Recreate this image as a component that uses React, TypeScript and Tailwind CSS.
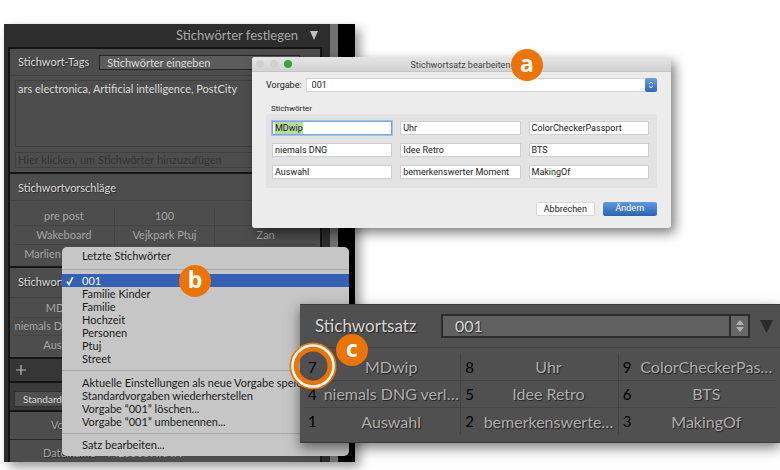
import { ReactNode } from 'react';

const suggestions = ['pre post', '100', '', 'Wakeboard', 'Vejkpark Ptuj', 'Zan', 'Marlien Familien', '', ''];
const panelSet = ['MDwip', 'Uhr', 'ColorChecker', 'niemals DNG verle…', 'Idee Retro', 'BTS', 'Auswahl', '', 'MakingOf'];
const presets = ['001', 'Familie Kinder', 'Familie', 'Hochzeit', 'Personen', 'Ptuj', 'Street'];
const actions = [
  'Aktuelle Einstellungen als neue Vorgabe speichern...',
  'Standardvorgaben wiederherstellen',
  'Vorgabe “001” löschen...',
  'Vorgabe “001” umbenennen...',
];
const dialogWords = [
  'MDwip',
  'Uhr',
  'ColorCheckerPassport',
  'niemals DNG',
  'Idee Retro',
  'BTS',
  'Auswahl',
  'bemerkenswerter Moment',
  'MakingOf',
];
const setWords = [
  { num: 7, label: 'MDwip' },
  { num: 8, label: 'Uhr' },
  { num: 9, label: 'ColorCheckerPas…' },
  { num: 4, label: 'niemals DNG verl…' },
  { num: 5, label: 'Idee Retro' },
  { num: 6, label: 'BTS' },
  { num: 1, label: 'Auswahl' },
  { num: 2, label: 'bemerkenswerte…' },
  { num: 3, label: 'MakingOf' },
];

function Badge({ children, className }: { children: ReactNode; className: string }) {
  return (
    <span
      className={`absolute flex h-8 w-8 items-center justify-center rounded-full bg-[#ec7404] pb-1 font-['Open_Sans',sans-serif] text-[23px] leading-none font-bold text-white ${className}`}
    >
      {children}
    </span>
  );
}

function WordGrid({ words, rowClass }: { words: string[]; rowClass: string }) {
  return (
    <div className="grid grid-cols-3 px-1">
      {words.map((word, i) => (
        <button
          key={i}
          className={`truncate border-r border-b border-[#444] text-[#a5a5a5] nth-[3n]:border-r-0 nth-[n+7]:border-b-0 ${rowClass}`}
        >
          {word}
        </button>
      ))}
    </div>
  );
}

function PresetMenu() {
  return (
    <div
      role="menu"
      className="absolute top-[223px] right-[6px] left-[58px] overflow-hidden rounded-[5px] bg-[#c6c6c6] pt-[2px] pb-[5px] text-[11px] leading-[13px] text-[#1c1c1c]"
    >
      <button role="menuitem" className="block h-[13px] pl-5">
        Letzte Stichwörter
      </button>
      <hr className="mt-[7px] mb-[4px] border-[#a9a9a9]" />
      {presets.map((name, i) => (
        <button
          key={name}
          role="menuitem"
          className={`flex h-[13px] w-full items-center pl-[4px] ${i === 0 ? 'bg-[#3560b4] text-white' : ''}`}
        >
          <span className="flex w-4 shrink-0">
            {i === 0 && (
              <svg viewBox="0 0 8 10" className="h-[10px] w-2" fill="none" stroke="currentColor" strokeWidth="1.6">
                <path d="M1 5.5 L3 8.5 L6.8 1" />
              </svg>
            )}
          </span>
          {name}
        </button>
      ))}
      <hr className="my-[5px] border-[#a9a9a9]" />
      {actions.map((action) => (
        <button key={action} role="menuitem" className="block h-[13px] w-full pl-5 text-left whitespace-nowrap">
          {action}
        </button>
      ))}
      <hr className="mt-[5px] mb-[4px] border-[#a9a9a9]" />
      <button role="menuitem" className="block h-[13px] pl-5">
        Satz bearbeiten...
      </button>
      <Badge className="top-[18px] left-[117px]">b</Badge>
    </div>
  );
}

function KeywordPanel() {
  return (
    <section className="absolute top-[24px] left-[4px] w-[45%] font-[Lato,sans-serif] shadow-[5px_5px_10px_rgba(0,0,0,0.4)]">
      <div className="flex bg-[#2d2d2d]">
        <div className="min-w-0 flex-1 pr-2 pl-1">
          <header className="flex h-[23px] items-center justify-end gap-3 pr-1 text-[13px] text-[#a8a8a8]">
            <h2>Stichwörter festlegen</h2>
            <svg viewBox="0 0 8 10" className="h-[10px] w-2" fill="#c0c0c0">
              <path d="M0 0H8L4 9Z" />
            </svg>
          </header>
          <div className="border-2 border-b-0 border-[#151515] bg-[#4d4d4d] text-[11px] text-[#dadada] text-shadow-[1px_1px_1px_#2a2a2a]">
            <div className="flex h-[27px] items-center gap-[10px] border-b border-[#434343] pr-5 pl-2">
              <label htmlFor="tags">Stichwort-Tags</label>
              <select
                id="tags"
                className="h-[15px] min-w-0 flex-1 appearance-none border border-[#252525] bg-[#5c5c5c] pl-[7px] leading-none"
              >
                <option>Stichwörter eingeben</option>
              </select>
            </div>
            <div className="px-[5px] py-[4px]">
              <textarea
                aria-label="Stichwörter"
                className="block h-[67px] w-full resize-none border border-[#3f3f3f] px-[2px] pt-px leading-[14px]"
                defaultValue="ars electronica, Artificial intelligence, PostCity"
              />
              <input
                aria-label="Stichwörter hinzufügen"
                placeholder="Hier klicken, um Stichwörter hinzuzufügen"
                className="mt-[5px] block h-4 w-full border border-[#404040] px-[2px] placeholder:text-[#343434]"
              />
            </div>
            <div className="border-t-2 border-[#151515] pb-[2px]">
              <h3 className="flex h-[27px] items-center border-b border-[#434343] pt-[2px] pl-2">
                Stichwortvorschläge
              </h3>
              <div className="pt-[6px]">
                <WordGrid words={suggestions} rowClass="h-[19px]" />
              </div>
            </div>
            <div className="border-t-2 border-[#151515] pb-[3px]">
              <h3 className="flex h-[29px] items-center pl-2">Stichwortsatz</h3>
              <div className="border-t border-[#434343] pt-[2px]">
                <WordGrid words={panelSet} rowClass="h-[18px]" />
              </div>
            </div>
            <div className="flex h-[26px] items-center border-y-2 border-[#151515] bg-[#363636] pl-[6px]">
              <button aria-label="Hinzufügen">
                <svg viewBox="0 0 10 10" className="h-[10px] w-[10px]" stroke="#bbb" strokeWidth="1.2">
                  <path d="M5 0V10M0 5H10" />
                </svg>
              </button>
            </div>
            <div className="flex h-[29px] items-center border-b-2 border-[#151515] bg-[#3a3a3a] px-1 pt-1">
              <button className="h-4 w-20 border border-[#303030] bg-[#505050] pl-2 text-left text-[10px]">
                Standard
              </button>
            </div>
            <div className="flex h-[28px] items-center border-b border-[#2a2a2a] pl-[41px] text-[#a5a5a5]">Vorgabe</div>
            <div className="flex h-[22px] items-center gap-3 pt-1 pl-[33px] text-[#a5a5a5]">
              <label htmlFor="file">Dateiname</label>
              <input id="file" defaultValue="MDJ0067.RAW" className="min-w-0 flex-1" />
            </div>
          </div>
        </div>
        <div className="w-[8px] bg-[#707070]" />
        <div className="w-[17px] bg-black" />
      </div>
      <PresetMenu />
    </section>
  );
}

function EditDialog() {
  return (
    <section
      role="dialog"
      aria-label="Stichwortsatz bearbeiten"
      className="absolute top-[57px] right-[14%] left-[252px] rounded-[3px] bg-[#ececec] font-[Roboto,sans-serif] text-[9px] text-[#222] shadow-[4px_5px_12px_rgba(0,0,0,0.5)]"
    >
      <header className="flex h-[15px] items-center gap-[6px] rounded-t-[3px] border-b border-[#c4c4c4] bg-gradient-to-b from-[#e6e6e6] to-[#d2d2d2] px-1">
        <span className="h-2 w-2 rounded-full bg-[#d0d0d0]" />
        <span className="h-2 w-2 rounded-full bg-[#d0d0d0]" />
        <span className="h-2 w-2 rounded-full bg-[#2fa836]" />
        <h2 className="flex-1 pt-[3px] pr-11 text-center text-[#444]">Stichwortsatz bearbeiten</h2>
      </header>
      <div className="px-[14px] pt-[6px] pb-3">
        <div className="flex h-[14px] items-center gap-1">
          <label htmlFor="preset" className="pt-[2px]">
            Vorgabe:
          </label>
          <div className="relative flex-1">
            <select
              id="preset"
              className="block h-[14px] w-full appearance-none border border-[#d6d6d6] bg-white pt-px pl-[5px] leading-none"
            >
              <option>001</option>
            </select>
            <span className="pointer-events-none absolute top-0 right-0 flex h-[14px] w-3 items-center justify-center rounded-[2px] bg-gradient-to-b from-[#6b9fdc] to-[#2f67b8]">
              <svg viewBox="0 0 6 8" className="h-2 w-[6px]" fill="none" stroke="white">
                <path d="M1 3L3 1L5 3M1 5L3 7L5 5" />
              </svg>
            </span>
          </div>
        </div>
        <p className="pt-[11px] pl-[5px] text-[8px] leading-[11px]">Stichwörter</p>
        <div className="grid grid-cols-3 gap-2 rounded-[2px] bg-[#e3e3e3] pt-[7px] pr-2 pb-[9px] pl-[6px]">
          {dialogWords.map((word, i) => (
            <div
              key={word}
              className={`flex h-[14px] border bg-white pl-[2px] ${i === 0 ? 'border-[#7fa6dc] ring-1 ring-[#a3c0e8]' : 'border-[#cfcfcf]'}`}
            >
              <input
                aria-label={`Stichwort ${i + 1}`}
                defaultValue={word}
                className={`min-w-0 pt-[2px] ${i === 0 ? '[field-sizing:content] bg-[#b7dba0]' : 'w-full'}`}
              />
            </div>
          ))}
        </div>
        <div className="flex justify-end gap-2 pt-[14px]">
          <button className="h-[14px] w-[59px] rounded-[2px] border border-[#dadada] bg-white">Abbrechen</button>
          <button className="h-[14px] w-[54px] rounded-[2px] bg-gradient-to-b from-[#6199dc] to-[#2c62b4] text-white">
            Ändern
          </button>
        </div>
      </div>
      <Badge className="-top-2 left-[259px]">a</Badge>
    </section>
  );
}

function SetPanel() {
  return (
    <section className="absolute top-[304px] right-0 left-[300px] border-y border-[#3a3a3a] bg-[#505050] font-[Lato,sans-serif] text-[#d6d6d6] shadow-[0_5px_12px_rgba(0,0,0,0.5)]">
      <div className="flex h-[43px] items-center border-b border-[#424242] pr-[7px] pl-[15px]">
        <label htmlFor="set" className="w-[126px] text-[17px] text-shadow-[1px_1px_1px_#222]">
          Stichwortsatz
        </label>
        <div className="relative flex-1">
          <select
            id="set"
            className="block h-6 w-full appearance-none border-2 border-[#2c2c2c] bg-[#606060] pl-3 text-[16px] leading-none text-shadow-[1px_1px_1px_#222]"
          >
            <option>001</option>
          </select>
          <span className="pointer-events-none absolute inset-y-0 right-0 flex w-[21px] items-center justify-center border-2 border-[#2c2c2c] bg-[#666]">
            <svg viewBox="0 0 8 12" className="h-3 w-2" fill="#b0b0b0">
              <path d="M0 5L4 0L8 5ZM0 7H8L4 12Z" />
            </svg>
          </span>
        </div>
        <button aria-label="Stichwortsatz einklappen" className="ml-[10px]">
          <svg viewBox="0 0 13 13" className="h-[13px] w-[13px]" fill="#2a2a2a">
            <path d="M0 0H13L6.5 13Z" />
          </svg>
        </button>
      </div>
      <div className="grid grid-cols-3 px-1 pt-[6px] pb-[7px]">
        {setWords.map(({ num, label }) => (
          <button
            key={num}
            className="flex h-[27px] items-center border-r border-b border-[#444] pl-[4px] nth-[3n]:border-r-0 nth-[n+7]:border-b-0"
          >
            <span className="w-[14px] shrink-0 text-left text-[15px] text-black">{num}</span>
            <span className="min-w-0 flex-1 text-center text-[16px] whitespace-nowrap text-[#adadad] text-shadow-[1px_1px_1px_#222]">
              {label}
            </span>
          </button>
        ))}
      </div>
      <svg viewBox="0 0 48 48" className="absolute top-[37px] left-[-11px] h-12 w-12" fill="none">
        <circle cx="24" cy="24" r="19" stroke="#ec7404" strokeWidth="9" />
        <circle cx="24" cy="24" r="20.5" stroke="white" strokeWidth="2.5" />
      </svg>
      <Badge className="top-[29px] left-[36px]">c</Badge>
    </section>
  );
}

export default function App() {
  return (
    <main className="relative min-h-screen overflow-hidden bg-white">
      <KeywordPanel />
      <EditDialog />
      <SetPanel />
    </main>
  );
}
